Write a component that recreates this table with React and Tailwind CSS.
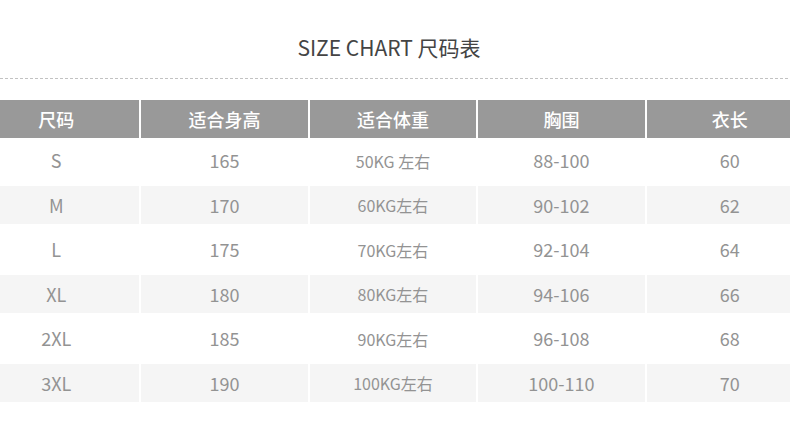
const headers = ["尺码", "适合身高", "适合体重", "胸围", "衣长"];

const rows = [
  ["S", "165", "50KG 左右", "88-100", "60"],
  ["M", "170", "60KG左右", "90-102", "62"],
  ["L", "175", "70KG左右", "92-104", "64"],
  ["XL", "180", "80KG左右", "94-106", "66"],
  ["2XL", "185", "90KG左右", "96-108", "68"],
  ["3XL", "190", "100KG左右", "100-110", "70"],
];

export default function App() {
  return (
    <div className="w-[790px] h-[443px] bg-white overflow-hidden font-['Noto_Sans_CJK_SC','Noto_Sans',sans-serif]">
      {/* title */}
      <div className="pt-[32px] pr-[12px] h-[78px] text-center text-[21px] leading-[30px] text-[#444]">
        SIZE CHART 尺码表
      </div>
      <div className="h-px w-full bg-[repeating-linear-gradient(90deg,#c2c2c2_0_3px,transparent_3px_5px)]" />

      {/* table */}
      <div className="mt-[21px] ml-[-27px] w-[840px]">
        <div className="grid grid-cols-5 gap-x-[2px]">
          {headers.map((h) => (
            <div
              key={h}
              className="h-[38px] bg-[#999] flex items-center justify-center text-white text-[18px] font-medium"
            >
              {h}
            </div>
          ))}
        </div>

        <div className="mt-[3.5px] flex flex-col gap-y-[6.5px]">
          {rows.map((r, i) => (
            <div key={r[0]} className="grid grid-cols-5 gap-x-[2px]">
              {r.map((c, j) => (
                <div
                  key={j}
                  className={
                    "h-[38px] flex items-center justify-center text-[#939393] font-normal " +
                    (j === 2 ? "text-[16px] " : "text-[18px] ") +
                    (i % 2 === 1 ? "bg-[#f5f5f5]" : "bg-white")
                  }
                >
                  {c}
                </div>
              ))}
            </div>
          ))}
        </div>
      </div>
    </div>
  );
}
